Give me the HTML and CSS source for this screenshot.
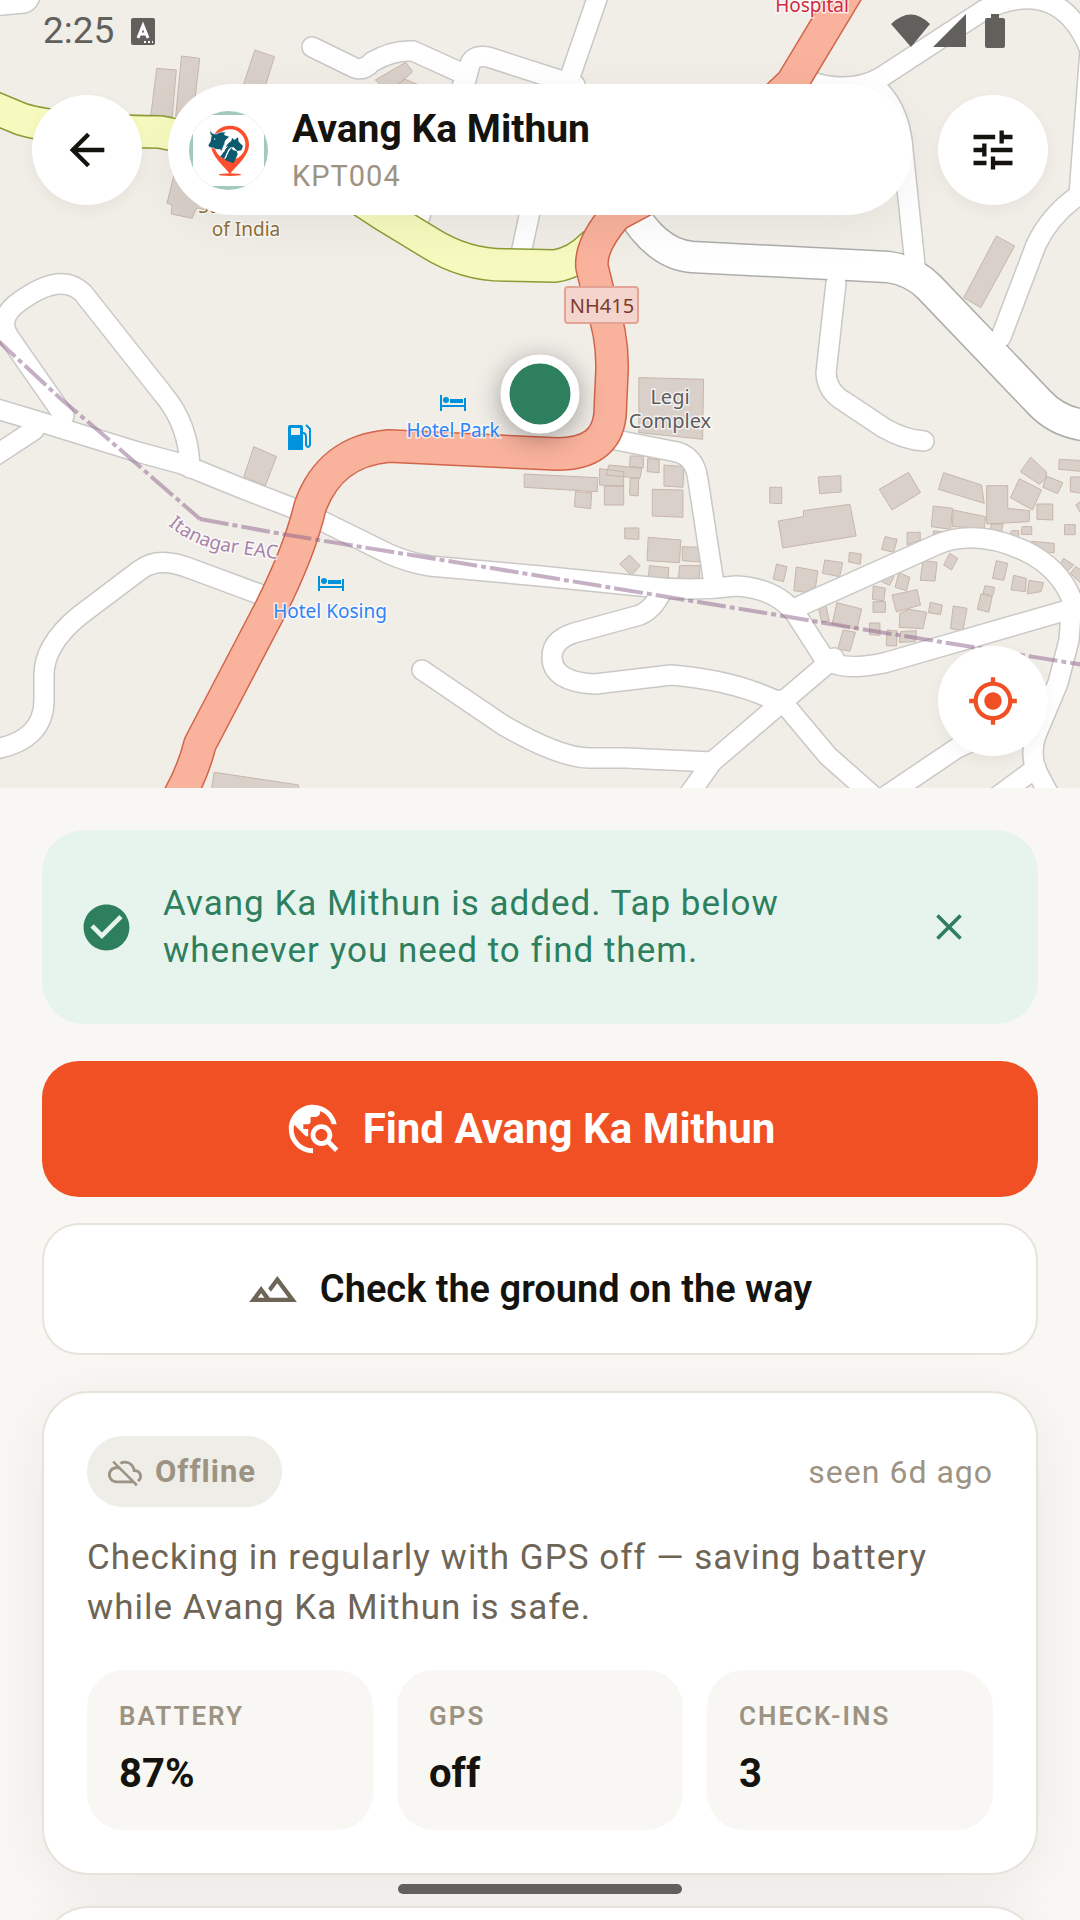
FILE: index.html
```html
<!DOCTYPE html>
<html lang="en">
<head>
<meta charset="utf-8">
<meta name="viewport" content="width=device-width, initial-scale=1">
<title>Avang Ka Mithun</title>
<link rel="stylesheet" href="styles.css">
</head>
<body>
<div class="app">
  <section class="map-area" aria-label="Map">
    <svg class="map" viewBox="0 0 1080 788" preserveAspectRatio="xMidYMid slice">
      <defs>
        <g id="streets">
          <path d="M-10 6 24 3Q32 0 30-12"/>
          <path d="M312 47 355 68Q364 71 372 62Q392 50 413 51L466 75"/>
          <path d="M466 80 470 64Q474 55 488 57L575 85"/>
          <path d="M600-10 569 80 540 165 520 258"/>
          <path d="M466 75 418 222"/>
          <path d="M64 416 9 337Q-2 320 15 305Q60 270 83 293L163 394Q189 425 190 468"/>
          <path d="M-10 407 34 420 138 452 182 464 241 488 293 508 324 522 389 554Q410 563 430 566L540 576 640 586Q690 592 736 586Q775 588 795 613L824 658"/>
          <path d="M-10 459 34 430"/>
          <path d="M262 595 189 568Q158 556 140 570L79 616Q44 645 44 675L44 700Q44 742-10 750"/>
          <path d="M422 670 503 725Q560 758 590 758L626 758 712 762"/>
          <path d="M834 658 781 703 712 762 685 800"/>
          <path d="M781 703Q735 680 671 675L595 684Q552 682 552 657Q552 640 574 633L640 615Q655 608 662 590"/>
          <path d="M781 700 828 756 880 802"/>
          <path d="M616 440 672 451Q695 454 698 480L714 584"/>
          <path d="M800 606 936 545Q975 528 1025 551Q1060 568 1072 600L1069 640 1058 683 1036 735Q1030 752 1036 770L1052 800"/>
          <path d="M824 658Q840 672 884 663L1095 602"/>
          <path d="M880 800 957 748 1036 712"/>
          <path d="M1036 768 990 802"/>
          <path d="M836 283 826 373Q827 392 845 402L884 428Q905 440 924 441"/>
          <path d="M812 82Q850 94 880 78L984 10Q1060-25 1090 50L1079 195Q1050 215 1036 245L1001 337"/>
          <path d="M871 83Q900 105 903 150L915 265"/>
        </g>
        <path id="main-road" d="M628 205Q655 254 692 257L888 267Q912 270 929 287L1039 402Q1060 425 1095 426"/>
        <path id="yellow-road" d="M-10 106 21 119Q60 131 160 132L300 160 384 215 430 243Q465 265 505 265L555 266Q575 263 592 246"/>
        <path id="highway" d="M854-20 792 83 700 170 616 215Q590 245 592 267L600 300Q613 335 612 370L610 415Q606 454 557 454L389 446Q330 451 310 507Q300 550 270 610L200 744Q192 776 174 805"/>
      </defs>
      <rect class="land" width="1080" height="788"/>
      <g class="buildings" transform="scale(.3444 .3333)">
        <path d="M455 205 512 210 500 350 438 345ZM527 168 580 175 560 350 510 350ZM740 150 797 170 770 260 705 260ZM1090 240 1178 187 1198 215 1150 260 1110 260ZM1150 255 1176 238 1210 252ZM505 525 485 610 500 615 497 642 558 655 570 625 610 630 620 520Z"/>
        <path d="M2893 708 2946 738 2848 923 2798 893Z"/>
        <path d="M737 1340 803 1370 770 1458 708 1430ZM622 2317 867 2355 867 2380 612 2380Z"/>
        <path d="M1855 1133 2043 1138 2040 1318 1855 1298Z"/>
      </g>
      <g class="buildings" transform="translate(540 400) scale(.3444 .3333)">
        <path d="M-46 222 168 233 166 275-46 262ZM103 275 150 278 147 326 100 320ZM173 206 243 215 243 258 173 255ZM187 258 243 258 243 315 187 315ZM200 195 296 205 290 235 192 225ZM262 168 300 168 300 203 260 200ZM262 235 287 235 285 288 260 285ZM313 175 346 180 346 218 311 215ZM360 195 418 200 415 262 360 258ZM326 268 415 270 415 352 326 348ZM246 384 287 384 287 418 246 416ZM314 412 409 420 405 488 311 482ZM413 440 460 442 465 486 413 482ZM231 492 260 465 291 497 266 526ZM318 497 374 503 372 537 315 530ZM405 497 465 497 462 537 402 535Z"/>
        <path d="M667 262 702 262 702 311 667 309ZM808 231 873 227 875 276 812 281ZM692 363 765 350 765 332 900 313 918 408 705 444ZM985 268 1070 217 1105 278 1022 330ZM1172 218 1282 255 1290 310 1157 268ZM1297 257 1358 257 1358 325 1422 332 1420 365 1297 372ZM1142 318 1198 325 1192 388 1136 380ZM1200 330 1294 350 1290 384 1197 380ZM1425 172 1470 215 1470 235 1450 253 1395 215ZM1392 236 1456 270 1430 330 1366 293ZM1470 228 1518 248 1503 281 1460 262ZM1508 178 1580 182 1580 215 1506 208ZM1540 231 1580 231 1580 281 1540 275ZM1443 312 1489 312 1489 360 1443 358ZM1556 315 1580 295 1580 358ZM1523 374 1554 374 1554 404 1523 404ZM1400 380 1428 380 1428 404 1397 403ZM1370 392 1390 392 1390 412 1360 408ZM1310 372 1345 372 1340 395 1308 388ZM1427 424 1493 430 1493 458 1460 455ZM1520 475 1550 495 1530 515 1512 490ZM1555 500 1580 515 1580 560 1540 520Z"/>
        <path d="M1002 410 1037 418 1027 457 992 448ZM1066 397 1104 397 1104 420 1066 435ZM1142 393 1165 395 1142 408ZM898 457 933 462 930 493 896 486ZM827 480 879 488 870 530 820 520ZM744 501 807 513 800 560 770 577 737 572ZM687 492 717 500 707 545 677 537ZM1112 482 1153 487 1147 543 1104 541ZM1190 460 1213 475 1195 510 1172 495ZM1325 482 1358 490 1347 541 1314 535ZM1042 518 1074 532 1064 572 1031 562ZM1010 520 1028 530 1015 556 992 545ZM1375 526 1412 535 1410 575 1368 570ZM1420 541 1462 548 1455 575 1415 582ZM968 558 1003 565 998 603 965 598ZM967 605 1003 605 1003 637 967 637ZM1022 585 1095 569 1105 615 1035 636ZM1292 557 1320 562 1315 587 1286 580ZM1280 582 1313 590 1303 637 1270 628ZM1133 607 1168 615 1163 644 1128 638ZM1200 618 1240 625 1228 692 1192 686ZM1045 640 1072 628 1123 637 1112 686 1043 682ZM862 608 934 627 920 688 848 672ZM880 690 916 697 900 754 865 746ZM808 620 830 615 840 662 818 668ZM957 669 987 669 987 706 957 704ZM1008 690 1037 693 1035 738 1005 737ZM1047 695 1093 692 1090 725 1043 727Z"/>
      </g>
      <use class="road street-edge" href="#streets"/>
      <use class="road main-edge" href="#main-road"/>
      <use class="road street-fill" href="#streets"/>
      <use class="road yellow-edge" href="#yellow-road"/>
      <use class="road yellow-fill" href="#yellow-road"/>
      <use class="road main-fill" href="#main-road"/>
      <use class="road highway-edge" href="#highway"/>
      <use class="road highway-fill" href="#highway"/>
      <path class="boundary" d="M-6 337 62 400 100 432 200 519"/>
      <path class="boundary" d="M200 519 282 534 540 576 747 610 867 630 1090 666"/>
      <rect class="shield" x="565" y="287" width="73" height="36" rx="3"/>
      <g class="labels">
        <text class="shield-text" x="602" y="313">NH415</text>
        <text class="medical" x="812" y="12">Hospital</text>
        <text class="bank" x="246" y="213">State Bank</text>
        <text class="bank" x="246" y="236">of India</text>
        <text class="hotel" x="453" y="437">Hotel Park</text>
        <text class="hotel" x="330" y="618">Hotel Kosing</text>
        <text class="place" x="670" y="404">Legi</text>
        <text class="place" x="670" y="428">Complex</text>
        <path id="district-line" fill="none" d="M168 525Q194 547 228 552L290 561"/>
        <text class="district"><textPath href="#district-line">Itanagar EAC</textPath></text>
      </g>
      <g class="poi">
        <path d="M440 395h2v10h22v-7h2v13h-2v-4h-22v4h-2zM450 399h13v4h-13z"/><circle cx="446" cy="400" r="3"/>
        <path d="M318 576h2v10h22v-7h2v12h-2v-3h-22v3h-2zM328 580h13v4h-13z"/><circle cx="324" cy="581" r="3"/>
        <path fill-rule="evenodd" d="M290 425h11q2 0 2 2v23h-15v-23q0-2 2-2zM291 428v7h9v-7z"/>
        <path class="hose" d="M303 433q3 0 3 4v8q2 4 4 0v-16l-4-4"/>
      </g>
    </svg>

    <div class="marker"></div>

    <div class="overlay">
      <div class="status-bar">
        <time class="clock">2:25</time>
        <svg class="keyboard" viewBox="0 0 24 27" width="24" height="27"><rect width="24" height="27" rx="2" fill="#61605d"/><path d="M7 20 12 7.500 17 20M8.500 16h7" fill="none" stroke="#fff" stroke-width="3"/><path d="M13 24h2m2 0h2m2 0h1" stroke="#fff" stroke-width="2"/></svg>
        <svg class="signals" viewBox="0 0 116 34" width="116" height="34" fill="#61605d"><path d="M0 10Q20-9 39 10L20 33Z"/><path d="M75 0V33H42Z"/><path d="M100 0h8v4h4q2 0 2 2v26q0 2-2 2H96q-2 0-2-2V6q0-2 2-2h4z"/></svg>
      </div>
      <header class="top-bar">
        <button class="round" aria-label="Back"><svg viewBox="0 0 24 24"><path d="M20 11H7.830l5.590-5.590L12 4l-8 8 8 8 1.410-1.410L7.830 13H20v-2z"/></svg></button>
        <div class="title-card">
          <svg class="avatar" viewBox="27 30 237 237">
            <path d="M27 30h237v237H27z" fill="#a3c9bc"/><path d="M39 42h213v213H39z" fill="#fff"/>
            <ellipse cx="150" cy="221" rx="34" ry="4" fill="#fd4f2d"/>
            <path d="M150 219C139 202 93 166 93 131a57 57 0 0 1 114 0c0 35-46 71-57 88z" fill="#fd4f2d"/>
            <circle cx="150" cy="131" r="46" fill="#fff"/>
            <path d="M93 84Q90 94 100 98L108 99Q120 91 137 93L133 101 149 107 144 112Q134 117 134 128L124 152 121 146 106 145 101 141 90 140 84 133 91 121 94 104Q86 95 93 84z" fill="#0b5a70" stroke="#fff" stroke-width="2"/>
            <path d="M134 150Q140 126 154 120L156 110 163 117 174 109 176 122 189 135 184 148 172 150 160 138 146 144 132 174 120 166Z" fill="#0b5a70"/>
            <path d="M134 177 147 150 153 140 160 148 170 150 173 160 168 172 160 187Z" fill="#0b5a70"/>
            <path d="M122 164Q130 146 143 136M136 172Q142 152 154 138" fill="none" stroke="#fff" stroke-width="3"/>
            <circle cx="104" cy="114" r="2" fill="#fff"/>
          </svg>
          <div>
            <h1>Avang Ka Mithun</h1>
            <p class="tag">KPT004</p>
          </div>
        </div>
        <button class="round" aria-label="Settings"><svg viewBox="0 0 24 24"><path d="M3 17v2h6v-2H3zM3 5v2h10V5H3zm10 16v-2h8v-2h-8v-2h-2v6h2zM7 9v2H3v2h4v2h2V9H7zm14 4v-2H11v2h10zm-6-4h2V7h4V5h-4V3h-2v6z"/></svg></button>
      </header>
      <button class="round locate" aria-label="Center map"><svg viewBox="0 0 24 24"><path d="M12 8c-2.210 0-4 1.790-4 4s1.790 4 4 4 4-1.790 4-4-1.790-4-4-4zm8.940 3c-.46-4.170-3.770-7.480-7.940-7.940V1h-2v2.060C6.830 3.520 3.520 6.830 3.060 11H1v2h2.060c.46 4.170 3.770 7.480 7.940 7.940V23h2v-2.060c4.170-.46 7.480-3.770 7.940-7.940H23v-2h-2.060zM12 19c-3.870 0-7-3.130-7-7s3.130-7 7-7 7 3.130 7 7-3.130 7-7 7z"/></svg></button>
    </div>
  </section>

  <main class="content">
    <div class="notice" role="status">
      <svg class="notice-icon" viewBox="0 0 24 24"><path d="M12 2C6.480 2 2 6.480 2 12s4.480 10 10 10 10-4.480 10-10S17.520 2 12 2zm-2 15l-5-5 1.410-1.410L10 14.170l7.590-7.590L19 8l-9 9z"/></svg>
      <p>Avang Ka Mithun is added. Tap below whenever you need to find them.</p>
      <button class="close" aria-label="Dismiss"><svg viewBox="0 0 24 24"><path d="M19 6.410L17.590 5 12 10.590 6.410 5 5 6.410 10.590 12 5 17.590 6.410 19 12 13.410 17.590 19 19 17.590 13.410 12z"/></svg></button>
    </div>

    <button class="action primary">
      <svg viewBox="0 0 24 24"><path d="M19.300 16.900c.4-.7.7-1.500.7-2.400 0-2.500-2-4.500-4.500-4.500S11 12 11 14.500s2 4.500 4.500 4.500c.9 0 1.700-.3 2.400-.7l3.200 3.200 1.400-1.400-3.200-3.200zm-3.800.1c-1.400 0-2.500-1.100-2.500-2.500s1.100-2.500 2.500-2.500 2.500 1.100 2.500 2.500-1.100 2.500-2.500 2.500zM12 20v2C6.480 22 2 17.520 2 12S6.480 2 12 2c4.840 0 8.870 3.440 9.800 8h-2.070c-.64-2.460-2.400-4.470-4.730-5.410V5c0 1.100-.9 2-2 2h-2v2c0 .55-.45 1-1 1H8v2h2v3H9l-4.790-4.790C4.080 10.790 4 11.380 4 12c0 4.410 3.590 8 8 8z"/></svg>
      <span>Find Avang Ka Mithun</span>
    </button>

    <button class="action secondary">
      <svg viewBox="0 0 24 24"><path d="M14 6l-4.220 5.630 1.250 1.670L14 9.330 19 16h-8.460l-4.010-5.370L1 18h22L14 6zM5 16l1.520-2.030L8.040 16H5z"/></svg>
      <span>Check the ground on the way</span>
    </button>

    <article class="card">
      <div class="card-head">
        <span class="badge">
          <svg viewBox="0 0 24 24"><path d="M19.350 10.040C18.670 6.590 15.640 4 12 4c-1.480 0-2.850.43-4.010 1.170l1.460 1.460C10.210 6.230 11.080 6 12 6c3.040 0 5.500 2.460 5.500 5.500v.5H19c1.660 0 3 1.340 3 3 0 1.130-.64 2.110-1.560 2.620l1.450 1.450C23.160 18.160 24 16.680 24 15c0-2.640-2.050-4.780-4.650-4.960zM3 5.270l2.750 2.740C2.560 8.150 0 10.770 0 14c0 3.310 2.690 6 6 6h11.730l2 2L21 20.730 4.270 4 3 5.270zM7.730 10l8 8H6c-2.210 0-4-1.790-4-4s1.790-4 4-4h1.730z"/></svg>
          Offline
        </span>
        <span class="seen">seen 6d ago</span>
      </div>
      <p class="summary">Checking in regularly with GPS off — saving battery while Avang Ka Mithun is safe.</p>
      <dl class="stats">
        <div class="stat"><dt>BATTERY</dt><dd>87%</dd></div>
        <div class="stat"><dt>GPS</dt><dd>off</dd></div>
        <div class="stat"><dt>CHECK-INS</dt><dd>3</dd></div>
      </dl>
    </article>

    <article class="card next-card"></article>
  </main>

  <div class="home-handle"></div>
</div>
</body>
</html>
```
FILE: styles.css
```css
* {
  box-sizing: border-box;
}

body,
h1,
p,
dl,
dd {
  margin: 0;
}

body {
  background: #f8f7f4;
  color: #14130e;
  font-family: Roboto, "Liberation Sans", sans-serif;
}

button {
  border: 0;
  padding: 0;
  font: inherit;
  color: inherit;
  cursor: pointer;
}

svg {
  display: block;
  flex: none;
}

.app {
  height: 100vh;
  overflow: hidden;
}

/* Map */
.map-area {
  position: relative;
  height: 788px;
  overflow: hidden;
}

.map {
  width: 100%;
  height: 100%;
}

.land {
  fill: #f1eee8;
}

.buildings path {
  fill: #d9d0c9;
  stroke: #c8b6ab;
  stroke-width: 1px;
  vector-effect: non-scaling-stroke;
}

.road {
  fill: none;
  stroke-linecap: round;
  stroke-linejoin: round;
}

.street-edge {
  stroke: #c9c8c6;
  stroke-width: 22px;
}

.street-fill {
  stroke: #fff;
  stroke-width: 19px;
}

.main-edge {
  stroke: #adadab;
  stroke-width: 33px;
}

.main-fill {
  stroke: #fff;
  stroke-width: 30px;
}

.yellow-edge {
  stroke: #8c9c35;
  stroke-width: 34px;
}

.yellow-fill {
  stroke: #f6fabe;
  stroke-width: 31px;
}

.highway-edge {
  stroke: #d2644a;
  stroke-width: 34px;
}

.highway-fill {
  stroke: #f9b29c;
  stroke-width: 31px;
}

.boundary {
  fill: none;
  stroke: #8d618b;
  stroke-opacity: .5;
  stroke-width: 4px;
  stroke-dasharray: 29 4 5 4;
}

.shield {
  fill: #f4d5cd;
  stroke: #e3a395;
  stroke-width: 2px;
}

.labels text {
  font: 19px "Noto Sans", sans-serif;
  text-anchor: middle;
  paint-order: stroke;
  stroke: #ffffffb0;
  stroke-width: 3px;
}

.labels .shield-text {
  fill: #7b3b2e;
  stroke: none;
  font-size: 20px;
}

.labels .medical {
  fill: #d02b3f;
}

.labels .bank {
  fill: #8f6f38;
}

.labels .hotel {
  fill: #2e84f7;
}

.labels .place {
  fill: #5c5c5c;
  font-size: 20px;
}

.labels .district {
  fill: #a983a9;
  text-anchor: start;
}

.poi {
  fill: #0092da;
}

.hose {
  fill: none;
  stroke: #0092da;
  stroke-width: 2px;
}

.marker {
  position: absolute;
  top: 50%;
  left: 50%;
  width: 79px;
  height: 79px;
  transform: translate(-50%, -50%);
  border: 9px solid #fff;
  border-radius: 50%;
  background: #2e7f5d;
  box-shadow: 0 5px 26px rgba(0, 0, 0, .35);
}

/* Controls over the map */
.overlay {
  position: absolute;
  inset: 0;
  display: flex;
  flex-direction: column;
  padding: 0 32px 32px;
}

.status-bar {
  display: flex;
  align-items: center;
  height: 62px;
  padding: 0 41px 0 11px;
}

.clock {
  color: #61605d;
  font-size: 37px;
  line-height: 42px;
}

.keyboard {
  margin-left: 17px;
}

.signals {
  margin-left: auto;
}

.top-bar {
  display: flex;
  align-items: center;
  gap: 26px;
  margin-top: 22px;
}

.title-card {
  flex: 1;
  display: flex;
  align-items: center;
  gap: 24px;
  padding: 19px 21px 18px;
  border-radius: 66px;
  background: #fff;
  box-shadow: 0 10px 50px rgba(0, 0, 0, .06);
}

.avatar {
  width: 79px;
  height: 79px;
  border-radius: 50%;
}

h1 {
  font-size: 39px;
  font-weight: 700;
  line-height: 52px;
}

.tag {
  color: #9c9383;
  font-size: 29px;
  line-height: 42px;
  letter-spacing: 1px;
}

.round {
  display: grid;
  place-items: center;
  width: 110px;
  height: 110px;
  border-radius: 50%;
  background: #fff;
  box-shadow: 0 5px 16px rgba(0, 0, 0, .05);
}

.round svg {
  width: 52px;
  height: 52px;
  fill: #14130e;
}

.locate {
  margin: auto 0 0 auto;
}

.locate svg {
  fill: #f15024;
}

/* Sheet below the map */
.content {
  display: flex;
  flex-direction: column;
  padding: 42px;
}

.notice {
  display: flex;
  align-items: center;
  padding: 34px 26px 34px 37px;
  border-radius: 42px;
  background: #e7f4ed;
  color: #2e7f5d;
}

.notice p {
  flex: 1;
  margin-left: 29px;
  font-size: 35px;
  line-height: 47px;
  letter-spacing: 1px;
}

.notice svg {
  fill: currentColor;
}

.notice-icon {
  width: 55px;
  height: 55px;
}

.close {
  display: grid;
  place-items: center;
  width: 126px;
  height: 126px;
  background: none;
}

.close svg {
  width: 44px;
  height: 44px;
}

.action {
  display: flex;
  align-items: center;
  justify-content: center;
  gap: 21px;
  padding: 39px 63px 39px 42px;
}

.primary {
  margin-top: 37px;
  border-radius: 37px;
  background: #f15024;
  color: #fff;
  font-size: 42px;
  font-weight: 700;
  line-height: 58px;
}

.primary svg {
  width: 58px;
  height: 58px;
  fill: #fff;
}

.secondary {
  margin-top: 26px;
  padding-top: 37px;
  padding-bottom: 37px;
  border: 2px solid #e8e3da;
  border-radius: 37px;
  background: #fff;
  font-size: 38px;
  font-weight: 600;
  line-height: 54px;
}

.secondary svg {
  width: 52px;
  height: 52px;
  fill: #6e6557;
}

.card {
  margin-top: 36px;
  padding: 43px;
  border: 2px solid #e8e3da;
  border-radius: 47px;
  background: #fff;
  box-shadow: 0 10px 60px rgba(20, 19, 14, .06);
}

.card-head {
  display: flex;
  align-items: center;
  justify-content: space-between;
}

.badge {
  display: flex;
  align-items: center;
  gap: 13px;
  padding: 15px 26px 15px 21px;
  border-radius: 36px;
  background: #eeede8;
  color: #9c9383;
  font-size: 31px;
  font-weight: 700;
  line-height: 41px;
  letter-spacing: 1px;
}

.badge svg {
  width: 34px;
  height: 34px;
  fill: currentColor;
}

.seen {
  color: #9c9383;
  font-size: 32px;
  line-height: 42px;
  letter-spacing: 1px;
}

.summary {
  margin-top: 26px;
  color: #6e6557;
  font-size: 35px;
  line-height: 50px;
  letter-spacing: 1px;
}

.stats {
  display: grid;
  grid-template-columns: repeat(3, 1fr);
  gap: 24px;
  margin-top: 37px;
}

.stat {
  padding: 26px 32px 30px;
  border-radius: 37px;
  background: #f8f7f4;
}

dt {
  color: #9c9383;
  font-size: 26px;
  font-weight: 600;
  line-height: 40px;
  letter-spacing: 2px;
}

dd {
  margin-top: 12px;
  font-size: 40px;
  font-weight: 700;
  line-height: 52px;
}

.next-card {
  min-height: 300px;
  margin-top: 31px;
}

.home-handle {
  position: fixed;
  bottom: 26px;
  left: 50%;
  width: 284px;
  height: 10px;
  margin-left: -142px;
  border-radius: 5px;
  background: #61605d;
}
```
